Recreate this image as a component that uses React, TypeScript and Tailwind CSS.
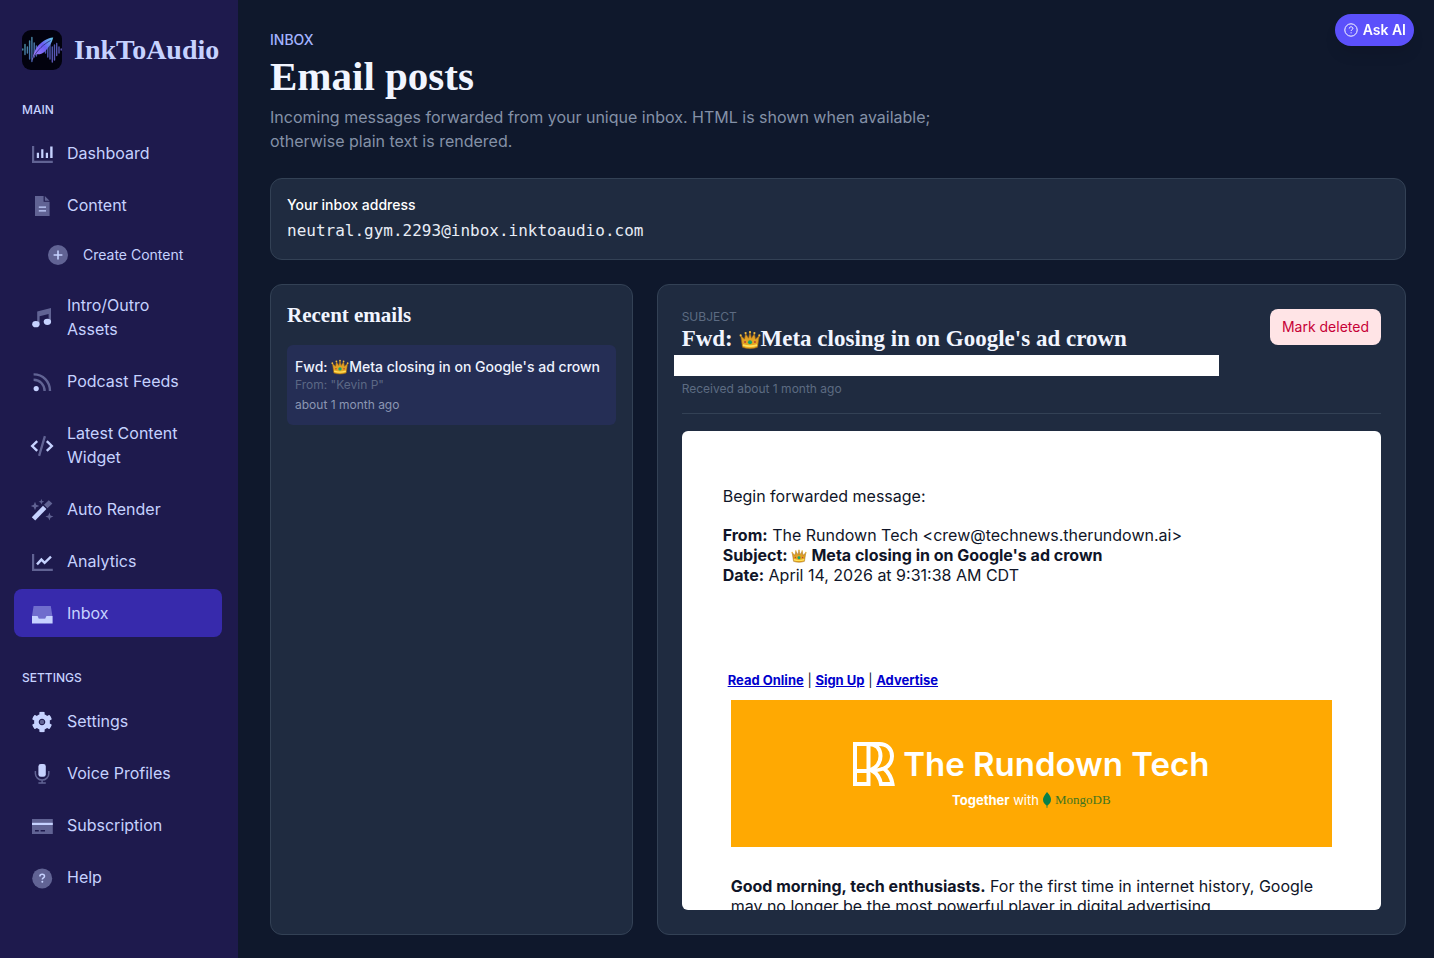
import type { ReactNode } from "react";
import { FaCog } from "react-icons/fa";

const serif = "font-['Liberation_Serif',serif] font-bold";

function Glyph({ children }: { children: ReactNode }) {
  return (
    <svg viewBox="0 0 24 24" className="size-6 shrink-0" fill="currentColor" aria-hidden="true">
      {children}
    </svg>
  );
}

const icons = {
  dashboard: (
    <Glyph>
      <path opacity=".4" d="M2 4h2.2v14.8H22.8V21H2z" />
      <path d="M6.8 10.8H9V16H6.8zM11.2 7.2h2.2V16h-2.2zM15.8 10.8H18V16h-2.2zM20.2 4.4h2.4V16h-2.4z" />
    </Glyph>
  ),
  content: (
    <Glyph>
      <path opacity=".4" d="M5 2h8.600v5.800h6V22H5z" />
      <path opacity=".4" d="M14.800 2 19.600 6.800H14.800z" />
      <path d="M8.8 12.4h7.2v1.4H8.8zM8.8 16.2h7.2v1.4H8.8z" />
    </Glyph>
  ),
  create: (
    <Glyph>
      <circle opacity=".4" cx="12" cy="12" r="10" />
      <path d="M11.2 7.6h1.6v3.6h3.6v1.6h-3.6v3.6h-1.6v-3.6H7.6v-1.6h3.6z" />
    </Glyph>
  ),
  music: (
    <Glyph>
      <path opacity=".4" d="M7.2 5.4 21 2v13.8h-2.4V8L9.6 10.200v7.800H7.2z" />
      <ellipse cx="5.9" cy="18.2" rx="3.7" ry="3.100" />
      <ellipse cx="17.4" cy="15.8" rx="3.7" ry="3.100" />
    </Glyph>
  ),
  feed: (
    <Glyph>
      <g opacity=".4" fill="none" stroke="currentColor" strokeWidth="2.4">
        <path d="M3.6 4.4C13 4.4 20 11.4 20 21" />
        <path d="M3.6 9.8c6.200 0 11 4.800 11 11.200" />
      </g>
      <circle cx="6.2" cy="18.6" r="2.6" />
    </Glyph>
  ),
  code: (
    <Glyph>
      <path opacity=".4" d="M13.8 1.800 16 2.400 10.200 22.200 8 21.600z" />
      <g fill="none" stroke="currentColor" strokeWidth="2.4">
        <path d="M7.200 7.200 2.200 12l5 4.800M16.800 7.200l5 4.800-5 4.800" />
      </g>
    </Glyph>
  ),
  wand: (
    <Glyph>
      <path d="M13 7.800 16.400 11 5.200 22.600 1.800 19.200z" />
      <path
        opacity=".4"
        d="M14 6.800 18.800 2.200 22.400 5.600 17.400 10.200zM5 3.800l1.200 3 3 1.200-3 1.200-1.200 3-1.200-3-3-1.200 3-1.200zM11.400 1l.8 2 2 .8-2 .8-.8 2-.8-2-2-.8 2-.8zM19.400 14.600l1.100 2.900 2.900 1.100-2.900 1.100-1.100 2.900-1.100-2.900-2.900-1.100 2.900-1.100z"
      />
    </Glyph>
  ),
  analytics: (
    <Glyph>
      <path opacity=".4" d="M2 4h2.200v14.800H22.800V21H2z" />
      <path
        d="m7 14.400 4.400-4.800 3.200 3.200 6.400-6.200"
        fill="none"
        stroke="currentColor"
        strokeWidth="2.400"
      />
    </Glyph>
  ),
  inbox: (
    <Glyph>
      <path opacity=".4" d="M3.600 4h17.200l1.600 10h-5.600l-1.500 2.500H8.800L7.200 14H2z" />
      <path d="M2 14h5.600l1.200 2.600h6.400l1.200-2.600H22.600v7.400H2z" />
    </Glyph>
  ),
  settings: (
    <Glyph>
      <circle cx="12" cy="12" r="2.200" opacity=".4" />
      <FaCog x={1.500} y={1.500} size={21} />
    </Glyph>
  ),
  mic: (
    <Glyph>
      <rect x="8.400" y="2" width="7.400" height="12.800" rx="2.400" />
      <path
        opacity=".4"
        d="M5.400 9v2.400a6.700 6.700 0 0 0 13.400 0V9M12.100 18v3M8.400 21h7.400"
        fill="none"
        stroke="currentColor"
        strokeWidth="1.500"
      />
    </Glyph>
  ),
  card: (
    <Glyph>
      <path
        opacity=".4"
        fillRule="evenodd"
        d="M2 5h20.800v15H2zM5 16h3.800v1.500H5zM10.600 16h4.400v1.500h-4.400z"
      />
      <path d="M2 8.800h20.800v2.200H2z" />
    </Glyph>
  ),
  help: (
    <Glyph>
      <circle opacity=".4" cx="12.200" cy="12.400" r="10" />
      <path
        d="M9.900 10.400c0-1.300 1-2.100 2.300-2.100s2.300.8 2.300 1.900c0 1.600-2.200 1.600-2.200 3.200"
        fill="none"
        stroke="currentColor"
        strokeWidth="1.500"
      />
      <circle cx="12.300" cy="15.800" r="1" />
    </Glyph>
  ),
};

function NavItem({ icon, label, active }: { icon: ReactNode; label: string; active?: boolean }) {
  return (
    <li>
      <a
        href="#"
        aria-current={active ? "page" : undefined}
        className={`flex items-center gap-[13px] rounded-lg py-3 pr-6 pl-4 leading-6 ${
          active ? "bg-[#372aac]" : ""
        }`}
      >
        <span className="flex size-6 shrink-0 items-center pt-0.5">{icon}</span>
        <span>{label}</span>
      </a>
    </li>
  );
}

function BrandMark() {
  return (
    <svg viewBox="0 0 40 40" className="size-10 shrink-0" aria-hidden="true">
      <defs>
        <linearGradient id="bars" gradientUnits="userSpaceOnUse" x1="0" y1="6" x2="40" y2="34">
          <stop offset="0" stopColor="#4fa9a8" />
          <stop offset=".5" stopColor="#4358a8" />
          <stop offset="1" stopColor="#6a55bd" />
        </linearGradient>
        <linearGradient id="quill" x1="1" y1="0" x2="0" y2="1">
          <stop offset="0" stopColor="#62cfe6" />
          <stop offset=".4" stopColor="#6a5cf5" />
          <stop offset="1" stopColor="#b48cf5" />
        </linearGradient>
      </defs>
      <rect width="40" height="40" rx="9" fill="#02020e" />
      <path
        stroke="url(#bars)"
        strokeWidth="1.400"
        strokeLinecap="round"
        d="M.8 19v1M3 14.500v10M5.400 17v6M7.600 11v18M9.900 7.500v24M12.200 13v14M14.400 16v10M23.500 18v5M25.800 15v12M28 12v17M30.300 17v15M32.500 15v15M34.700 13.500v12M37 17v6M39.200 19v1"
      />
      <path
        d="M31.200 7.500C25 8 18.500 12 14.500 18c-2 3-3.500 8-4.600 13 1.400-3 2.600-5 4.300-6.700 3.600.4 7.200-.9 9.600-3.900 2.800-3.200 5.800-6.500 7.400-12.900z"
        fill="url(#quill)"
      />
      <path d="M28.500 10.500C22 14 15.500 19.500 11 28" stroke="#1d1b5e" strokeWidth=".7" fill="none" />
    </svg>
  );
}

function Crown({ className }: { className: string }) {
  return (
    <svg viewBox="0 0 24 20" className={className} role="img" aria-label="crown">
      <defs>
        <linearGradient id="gold" x1="0" y1="0" x2="0" y2="1">
          <stop offset="0" stopColor="#d99a2b" />
          <stop offset="1" stopColor="#e9ab1c" />
        </linearGradient>
      </defs>
      <path
        d="M1.800 5 6 9 7.200 2.800l3.200 5.200L12 1l1.600 7 3.200-5.200L18 9l4.200-4-2 13c-5 1.900-11.400 1.900-16.400 0z"
        fill="url(#gold)"
        stroke="#9c6414"
        strokeWidth=".7"
      />
      <path d="M4.200 15.500c5 1.600 10.600 1.600 15.600 0" stroke="#ffe15c" strokeWidth="1.800" fill="none" />
      <circle cx="12" cy="12.500" r="2.200" fill="#18a36b" />
      <circle cx="6.600" cy="12.300" r="1.100" fill="#b5433b" />
      <circle cx="17.400" cy="12.300" r="1.100" fill="#b5433b" />
      <g fill="#eebb3f">
        <circle cx="1.800" cy="5" r="1.200" />
        <circle cx="7.200" cy="2.400" r="1.200" />
        <circle cx="12" cy="1.400" r="1.200" />
        <circle cx="16.800" cy="2.400" r="1.200" />
        <circle cx="22.200" cy="5" r="1.200" />
      </g>
    </svg>
  );
}

function Sidebar() {
  return (
    <aside className="w-[238px] shrink-0 bg-[#1e1a4d] pt-[30px] pr-4 pl-3.5 text-[#c6d2ff]">
      <a href="#" className="flex items-center gap-3 pl-2">
        <BrandMark />
        <span className={`text-[28px] leading-10 ${serif}`}>InkToAudio</span>
      </a>
      <nav aria-label="Primary">
        <h2 className="mt-[30px] pl-2 text-xs leading-5 font-medium">MAIN</h2>
        <ul className="mt-[9px] flex flex-col gap-1">
          <NavItem icon={icons.dashboard} label="Dashboard" />
          <NavItem icon={icons.content} label="Content" />
          <li>
            <a href="#" className="flex h-11 items-center gap-[13px] pl-8 text-sm">
              <span className="flex size-6 shrink-0 items-center">{icons.create}</span>
              <span>Create Content</span>
            </a>
          </li>
          <NavItem icon={icons.music} label="Intro/Outro Assets" />
          <NavItem icon={icons.feed} label="Podcast Feeds" />
          <NavItem icon={icons.code} label="Latest Content Widget" />
          <NavItem icon={icons.wand} label="Auto Render" />
          <NavItem icon={icons.analytics} label="Analytics" />
          <NavItem icon={icons.inbox} label="Inbox" active />
        </ul>
        <h2 className="mt-[31px] pl-2 text-xs leading-5 font-medium">SETTINGS</h2>
        <ul className="mt-[9px] flex flex-col gap-1">
          <NavItem icon={icons.settings} label="Settings" />
          <NavItem icon={icons.mic} label="Voice Profiles" />
          <NavItem icon={icons.card} label="Subscription" />
          <NavItem icon={icons.help} label="Help" />
        </ul>
      </nav>
    </aside>
  );
}

function Banner() {
  return (
    <div className="mx-2 flex aspect-[602/147] flex-col items-center justify-center bg-[#ffa902] pt-1.5 text-white">
      <div className="flex items-center gap-2">
        <svg
          viewBox="0 0 42 44"
          className="h-11 w-[42px]"
          fill="none"
          stroke="white"
          strokeWidth="4"
          aria-hidden="true"
        >
          <path d="M15.500 2H26.500C34 2 39 7 39 14c0 5.500-3 10-8 12.500 4 3.500 7.500 9 8.500 15.500H28c-1-6-4-10.500-9-13.500" />
          <path d="M2 2h13.500v40H2zM2 29h13.500" />
          <path d="M15.500 2c8 0 12 5 12 12s-4.500 12.500-12 14.500" />
          <path d="M18 28.500c5 0 9-.5 13-2" />
        </svg>
        <span className="text-[33px] leading-11 font-semibold">The Rundown Tech</span>
      </div>
      <div className="mt-1 flex items-center gap-1 text-[13px] leading-5">
        <span>
          <b className="font-bold">Together</b> with
        </span>
        <svg viewBox="0 0 8 16" className="h-4 w-2" aria-hidden="true">
          <path
            d="M4 0c3 3 4 5.500 4 7.500 0 3-1.500 4.500-3.500 6L4.300 16h-.6l-.2-2.500C1.500 12 0 10.500 0 7.500 0 5.500 1.500 3 4 0z"
            fill="#08804a"
          />
        </svg>
        <span className="font-['Liberation_Serif',serif] text-[#3f7420]">MongoDB</span>
      </div>
    </div>
  );
}

function EmailBody() {
  return (
    <div className="mt-[17px] h-[50vh] overflow-hidden rounded-md bg-white px-[41px] pt-[55px] text-[#101528]">
      <p className="leading-5">Begin forwarded message:</p>
      <p className="mt-[19px] leading-5">
        <b>From:</b> The Rundown Tech &lt;crew@technews.therundown.ai&gt;
        <br />
        <b>
          Subject: <Crown className="mr-1 inline h-3.5 w-4 align-[-2px]" />
          Meta closing in on Google's ad crown
        </b>
        <br />
        <b>Date:</b> April 14, 2026 at 9:31:38 AM CDT
      </p>
      <p className="mt-[85px] pl-[5px] text-[13px] leading-5">
        <a href="#" className="font-bold text-[#0000cd] underline">
          Read Online
        </a>{" "}
        |{" "}
        <a href="#" className="font-bold text-[#0000cd] underline">
          Sign Up
        </a>{" "}
        |{" "}
        <a href="#" className="font-bold text-[#0000cd] underline">
          Advertise
        </a>
      </p>
      <div className="mt-2.5">
        <Banner />
      </div>
      <p className="mx-2 mt-[29px] leading-5">
        <b>Good morning, tech enthusiasts.</b> For the first time in internet history, Google may no
        longer be the most powerful player in digital advertising.
      </p>
    </div>
  );
}

const panel = "rounded-xl border border-[#334155] bg-[#1f2b40]";

export default function App() {
  return (
    <div className="relative flex min-h-screen bg-[#0f182c] font-['Inter',sans-serif] text-base">
      <Sidebar />
      <main className="min-w-0 flex-1 pt-[30px] pr-7 pb-[22px] pl-8">
        <header>
          <p className="text-sm leading-5 font-medium text-[#a3b3ff]">INBOX</p>
          <h1 className={`mt-1.5 text-[41px] leading-10 text-[#f1f5ff] ${serif}`}>Email posts</h1>
          <p className="mt-[9px] max-w-2xl leading-6 text-[#8491a7]">
            Incoming messages forwarded from your unique inbox. HTML is shown when available;
            otherwise plain text is rendered.
          </p>
        </header>

        <section className={`mt-[25px] p-4 ${panel}`}>
          <h2 className="text-sm leading-5 font-medium text-white">Your inbox address</h2>
          <p className="mt-1 font-['DejaVu_Sans_Mono',monospace] leading-6 text-[#e8edf6]">
            neutral.gym.2293@inbox.inktoaudio.com
          </p>
        </section>

        <div className="mt-6 grid grid-cols-3 gap-6">
          <section className={`p-4 ${panel}`}>
            <h2 className={`text-[21px] leading-7 text-[#f1f5ff] ${serif}`}>Recent emails</h2>
            <ul className="mt-4">
              <li>
                <a href="#" className="block rounded-md bg-[#252e55] px-2 py-3">
                  <span className="block truncate text-sm leading-5 font-medium text-[#eef2ff]">
                    Fwd: <Crown className="inline h-4 w-[18px] align-[-3px]" />
                    Meta closing in on Google's ad crown
                  </span>
                  <span className="block text-xs leading-4 text-[#5c6885]">From: "Kevin P"</span>
                  <span className="mt-1 block text-xs leading-4 text-[#8b96b3]">
                    about 1 month ago
                  </span>
                </a>
              </li>
            </ul>
          </section>

          <section className={`col-span-2 p-6 ${panel}`}>
            <header className="flex items-start justify-between border-b border-[#334155] pb-4">
              <div className="min-w-0 flex-1">
                <p className="text-xs leading-4 text-[#5d6b82]">SUBJECT</p>
                <h2 className={`text-[23px] leading-7 text-[#f1f5ff] ${serif}`}>
                  Fwd: <Crown className="inline h-5 w-[22px] align-[-4px]" />
                  Meta closing in on Google's ad crown
                </h2>
                <div className="mt-0.5 -ml-2 h-[21px] max-w-[545px] bg-white" />
                <p className="mt-[5px] text-xs leading-4 text-[#5d6b82]">
                  Received about 1 month ago
                </p>
              </div>
              <button
                type="button"
                className="rounded-lg bg-[#ffe4e6] px-3 py-2 text-sm leading-5 text-[#c70036]"
              >
                Mark deleted
              </button>
            </header>
            <EmailBody />
          </section>
        </div>
      </main>

      <button
        type="button"
        className="fixed top-3.5 right-5 flex items-center gap-1 rounded-full bg-[#5b50fb] py-1.5 pr-2 pl-2 text-sm leading-5 font-semibold text-white shadow-lg"
      >
        <svg viewBox="0 0 16 16" className="size-4" fill="none" stroke="currentColor" aria-hidden="true">
          <circle cx="8" cy="8" r="6.200" />
          <path d="M6.300 6.500c0-1 .8-1.700 1.800-1.700s1.800.7 1.800 1.600c0 1.300-1.800 1.300-1.800 2.500M8.100 10.300v1" />
        </svg>
        Ask AI
      </button>
    </div>
  );
}
